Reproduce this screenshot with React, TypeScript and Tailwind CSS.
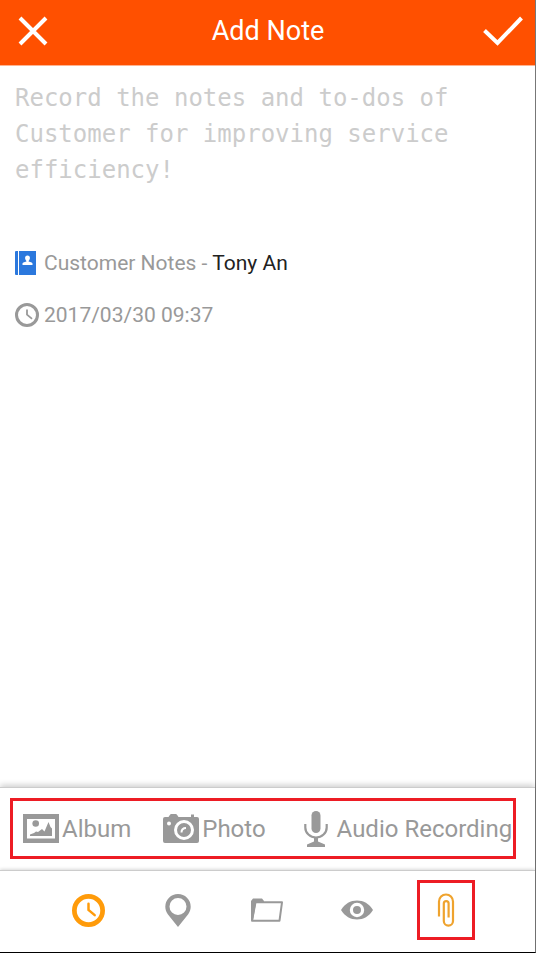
import type { ReactNode } from "react";

function ClockIcon({ className, ring }: { className: string; ring: number }) {
  return (
    <svg viewBox="0 0 32 32" className={className} fill="none" stroke="currentColor" aria-hidden="true">
      <circle cx="16" cy="16" r={16 - ring / 2} strokeWidth={ring} />
      <path d="M16 9.5v6l6 5" strokeWidth="2.4" strokeLinecap="round" />
    </svg>
  );
}

function NotebookIcon() {
  return (
    <svg viewBox="0 0 21 24" className="h-6 w-[21px] shrink-0" fill="#2b78dd" aria-hidden="true">
      <path d="M1 0h2v24H1a1 1 0 0 1-1-1V1a1 1 0 0 1 1-1zM4 0h17v24H4z" />
      <path
        fill="#fff"
        d="M12.5 4.600a2.400 2.400 0 0 1 2.400 2.500c0 1.200-.5 2.100-1.300 2.800v.6l3 .9c.6.200.9.600.9 1.200V14H7.500v-1.400c0-.6.3-1 .9-1.200l3-.9v-.6c-.8-.7-1.300-1.600-1.300-2.800a2.400 2.400 0 0 1 2.400-2.500z"
      />
    </svg>
  );
}

function AlbumIcon() {
  return (
    <svg viewBox="0 0 36 29" className="h-[29px] w-9" fill="currentColor" aria-hidden="true">
      <path fillRule="evenodd" d="M0 0h36v29H0zM4 5v19.500h28V5z" />
      <circle cx="12.700" cy="9.500" r="3.300" />
      <path d="M7 22v-1.500l4-1.500 2-1.500 2 .5 4-3 2.500 2.500L25.500 8l2 5 1.500 1.500V22z" />
    </svg>
  );
}

function CameraIcon() {
  return (
    <svg viewBox="0 0 36 29" className="h-[29px] w-9" fill="currentColor" aria-hidden="true">
      <path d="M2 3h3.500l1.500-2.300C7.300.2 7.700 0 8.200 0h4.600c.5 0 .9.200 1.200.7L15.500 3H28V.5h3V3h3a2 2 0 0 1 2 2v22a2 2 0 0 1-2 2H2a2 2 0 0 1-2-2V5a2 2 0 0 1 2-2z" />
      <circle cx="6" cy="9.500" r="2" fill="#fff" />
      <circle cx="21" cy="16" r="8.500" fill="none" stroke="#fff" strokeWidth="3" />
      <path d="M18.500 18.500c0-2.800 1.700-4.500 4.500-4.500" fill="none" stroke="#fff" strokeWidth="2" />
    </svg>
  );
}

function MicIcon() {
  return (
    <svg viewBox="-6 0 36 36" className="size-9" fill="currentColor" aria-hidden="true">
      <rect x="7.500" y="0" width="9" height="22" rx="4.500" />
      <path d="M1.300 13v3.500a10.700 10 0 0 0 21.400 0V13" fill="none" stroke="currentColor" strokeWidth="2.200" />
      <path d="M10 26h4v4.500l7 3V36H3v-2.500l7-3z" />
    </svg>
  );
}

function PinIcon() {
  return (
    <svg viewBox="0 0 26 33" className="h-[33px] w-[26px]" fill="currentColor" aria-hidden="true">
      <path
        fillRule="evenodd"
        d="M13 0a12.700 12.700 0 0 1 12.700 12.700c0 3-1 5-2.500 7.500L13 33 2.800 20.200C1.300 17.700.3 15.700.3 12.700A12.700 12.700 0 0 1 13 0zm0 4a8.500 8.500 0 1 0 0 17 8.500 8.500 0 0 0 0-17z"
      />
    </svg>
  );
}

function FolderIcon() {
  return (
    <svg viewBox="0 0 34 24" className="h-6 w-[34px]" fill="currentColor" aria-hidden="true">
      <path d="M1 22V3L3 .5h9L14 3v2H6L3 22z" />
      <path
        d="M5.500 4.300H32L29.500 22.700H2z"
        fill="none"
        stroke="currentColor"
        strokeWidth="2"
        strokeLinejoin="round"
      />
    </svg>
  );
}

function EyeIcon() {
  return (
    <svg viewBox="0 0 32 20" className="h-5 w-8" fill="currentColor" aria-hidden="true">
      <path d="M0 10C4 3.500 9.500.5 16 .5S28 3.500 32 10c-4 6.500-9.500 9.500-16 9.500S4 16.500 0 10z" />
      <circle cx="16" cy="10" r="5.600" fill="none" stroke="#fff" strokeWidth="3.200" />
    </svg>
  );
}

function ClipIcon() {
  return (
    <svg viewBox="0 0 18 34" className="h-[34px] w-[18px]" fill="none" stroke="currentColor" aria-hidden="true">
      <path
        d="M2 23.500V8.500a7 7 0 0 1 14 0V28a4.600 4.600 0 0 1-9.200 0V10.500a2.400 2.400 0 0 1 4.800 0v14"
        strokeWidth="2.200"
      />
    </svg>
  );
}

const attachments: { label: string; icon: ReactNode }[] = [
  { label: "Album", icon: <AlbumIcon /> },
  { label: "Photo", icon: <CameraIcon /> },
  { label: "Audio Recording", icon: <MicIcon /> },
];

const tools: { label: string; icon: ReactNode; color: string }[] = [
  { label: "Time", icon: <ClockIcon className="size-[33px]" ring={4.6} />, color: "text-[#ff9b0a]" },
  { label: "Location", icon: <PinIcon />, color: "text-[#999]" },
  { label: "Folder", icon: <FolderIcon />, color: "text-[#999]" },
  { label: "Visibility", icon: <EyeIcon />, color: "text-[#999]" },
  { label: "Attachments", icon: <ClipIcon />, color: "text-[#efa32e] border-[3px] border-[#ed1c24]" },
];

export default function App() {
  return (
    <div className="flex min-h-screen flex-col border-r border-b border-r-[#777] border-b-black bg-white font-['Roboto',sans-serif] text-[#999]">
      <header className="flex h-[66px] items-center justify-between border-b border-[#ffb38f] bg-[#ff5000] pr-3 pb-1 pl-[18px] text-white">
        <button type="button" aria-label="Close" className="w-[35px]">
          <svg viewBox="0 0 30 30" className="size-[30px]" fill="none" stroke="currentColor" strokeWidth="4">
            <path d="M2 2l26 26M28 2L2 28" />
          </svg>
        </button>
        <h1 className="text-[27px] leading-8">Add Note</h1>
        <button type="button" aria-label="Save" className="w-10">
          <svg viewBox="0 0 40 30" className="h-[30px] w-10" fill="none" stroke="currentColor" strokeWidth="4">
            <path d="M1.500 14.500L14.500 27 38.500 2" />
          </svg>
        </button>
      </header>

      <main className="flex-1 px-[15px] pt-[14px]">
        <textarea
          aria-label="Note"
          rows={4}
          placeholder="Record the notes and to-dos of Customer for improving service efficiency!"
          className="block w-full resize-none font-['DejaVu_Sans_Mono',monospace] text-2xl leading-9 text-[#333] outline-none placeholder:text-[#ccc]"
        />
        <div className="mt-[25px] flex items-center gap-2 text-[21px] leading-7">
          <NotebookIcon />
          <p>
            Customer Notes - <span className="text-[#222]">Tony An</span>
          </p>
        </div>
        <div className="mt-6 flex items-center gap-[5px] text-[21px] leading-7">
          <ClockIcon className="size-6 shrink-0" ring={4} />
          <time dateTime="2017-03-30T09:37">2017/03/30 09:37</time>
        </div>
      </main>

      <section
        aria-label="Add attachment"
        className="border-t border-[#ccc] bg-white pt-[10px] pr-[19px] pb-[11px] pl-[10px] shadow-[0_-2px_6px_rgba(0,0,0,0.2)]"
      >
        <div className="flex h-[61px] items-center gap-8 border-[3px] border-[#ed1c24] pl-[10px]">
          {attachments.map((item) => (
            <button key={item.label} type="button" className="flex items-center gap-[3px] text-2xl whitespace-nowrap">
              {item.icon}
              <span>{item.label}</span>
            </button>
          ))}
        </div>
      </section>

      <nav
        aria-label="Note tools"
        className="grid h-[82px] grid-cols-5 items-center justify-items-center border-t border-[#ccc] bg-white px-11 pb-[3px] shadow-[0_-1px_3px_rgba(0,0,0,0.15)]"
      >
        {tools.map((tool) => (
          <button
            key={tool.label}
            type="button"
            aria-label={tool.label}
            className={`flex h-[60px] w-[58px] items-center justify-center ${tool.color}`}
          >
            {tool.icon}
          </button>
        ))}
      </nav>
    </div>
  );
}
